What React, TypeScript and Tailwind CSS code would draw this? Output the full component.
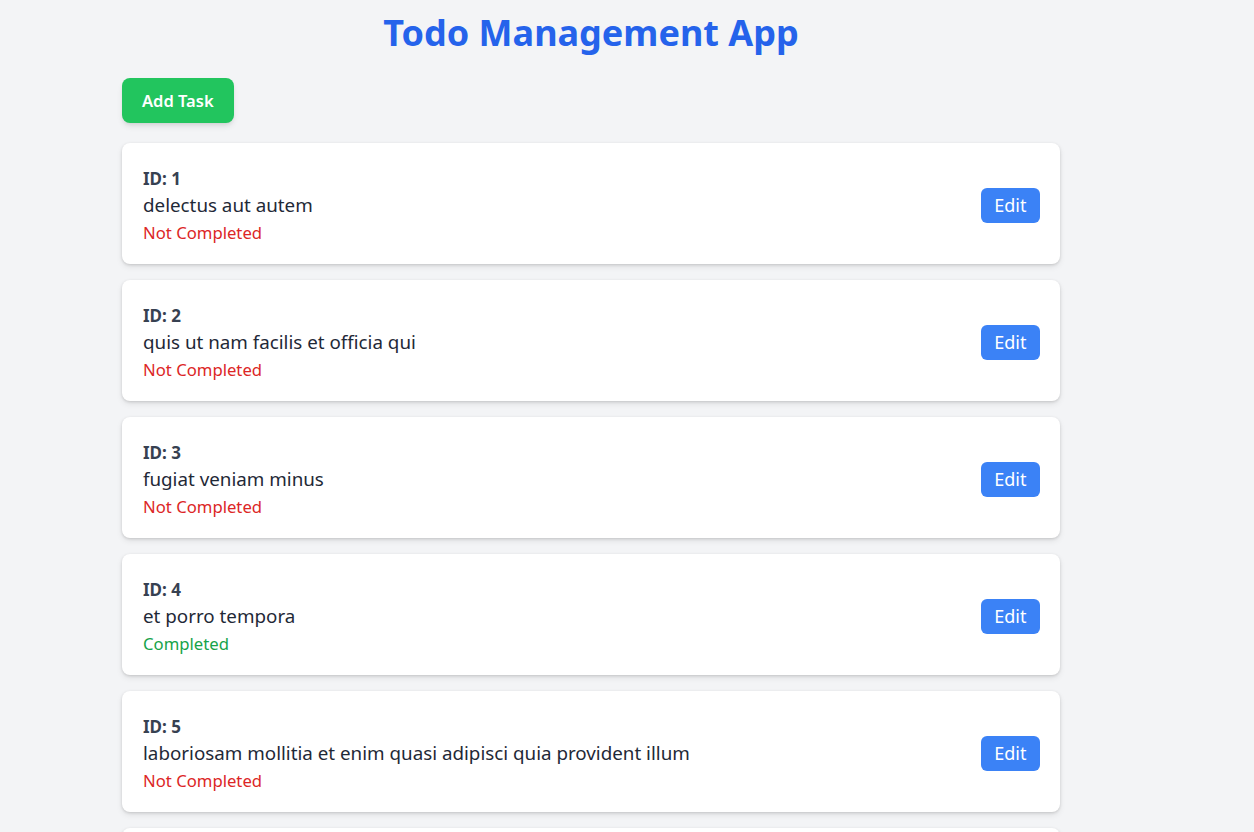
import { useState } from "react";

type Todo = { id: number; title: string; completed: boolean };

const TODOS: Todo[] = [
  { id: 1, title: "delectus aut autem", completed: false },
  { id: 2, title: "quis ut nam facilis et officia qui", completed: false },
  { id: 3, title: "fugiat veniam minus", completed: false },
  { id: 4, title: "et porro tempora", completed: true },
  { id: 5, title: "laboriosam mollitia et enim quasi adipisci quia provident illum", completed: false },
  { id: 6, title: "qui ullam ratione quibusdam voluptatem quia omnis", completed: false },
];

export default function App() {
  const [todos] = useState(TODOS);

  return (
    <div className="min-h-screen bg-[#f3f4f6] text-[#1f2937] font-['Noto_Sans','Open_Sans',sans-serif] text-[18px] leading-[27px]">
      <div className="w-[938px] ml-[122px] pt-[13px]">
        <h1 className="text-[36px] leading-[40px] font-bold text-[#2563eb] text-center mb-[25px]">Todo Management App</h1>
        <button className="bg-[#22c55e] text-white font-semibold text-[16.5px] leading-[27px] px-5 py-[9px] rounded-lg shadow-md mb-5">
          Add Task
        </button>
        <ul>
          {todos.map((t) => (
            <li key={t.id} className="bg-white rounded-lg shadow-[0_1px_3px_rgba(0,0,0,0.14),0_3px_6px_rgba(0,0,0,0.08)] px-5 pt-[22px] pb-[18px] mb-4 flex items-center justify-between">
              <div className="pl-px">
                <p className="font-bold text-[#374151] text-[17px]">ID: {t.id}</p>
                <p className="text-[18.8px]">{t.title}</p>
                <p className={t.completed ? "text-[#16a34a] text-[16.7px]" : "text-[#dc2626] text-[16.7px]"}>
                  {t.completed ? "Completed" : "Not Completed"}
                </p>
              </div>
              <button className="bg-[#3b82f6] text-white px-[13.5px] py-1 rounded-md">Edit</button>
            </li>
          ))}
        </ul>
      </div>
    </div>
  );
}
